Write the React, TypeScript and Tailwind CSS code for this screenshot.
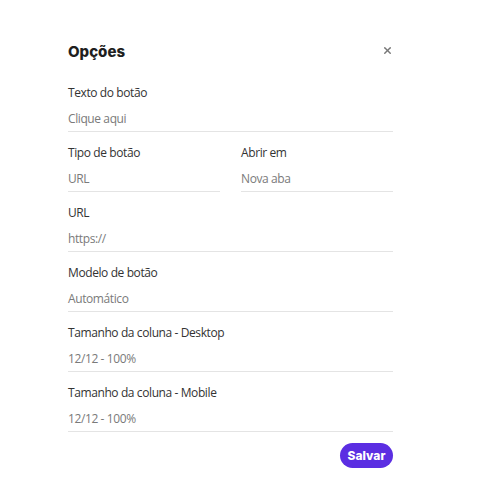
import { X } from 'lucide-react';

type Field = { label: string; value: string };

function FieldRow({ label, value }: Field) {
  return (
    <div className="flex flex-col">
      <span className="h-[20px] text-[12px] leading-[20px] tracking-[-0.4px] text-[#333333]">{label}</span>
      <span className="mt-[6px] h-[20px] text-[12px] leading-[20px] tracking-[-0.4px] text-[#7a7a7a]">{value}</span>
      <div className="mt-[2px] border-b border-[#e4e4e4]" />
    </div>
  );
}

export default function App() {
  const fields: Field[] = [
    { label: 'URL', value: 'https://' },
    { label: 'Modelo de botão', value: 'Automático' },
    { label: 'Tamanho da coluna - Desktop', value: '12/12 - 100%' },
    { label: 'Tamanho da coluna - Mobile', value: '12/12 - 100%' },
  ];

  return (
    <div className="h-[503px] w-[500px] bg-white font-['Open_Sans',sans-serif]">
      <div className="ml-[68px] w-[325px] pt-[42px]">
        {/* header */}
        <div className="flex h-[20px] items-center justify-between">
          <h2 className="font-['Inter',sans-serif] text-[15px] font-extrabold leading-[20px] text-[#1f1f1f]">
            Opções
          </h2>
          <button className="-mt-[4px] text-[#777777]">
            <X size={11} strokeWidth={3} />
          </button>
        </div>

        {/* form */}
        <div className="mt-[21px] flex flex-col gap-[11px]">
          <FieldRow label="Texto do botão" value="Clique aqui" />
          <div className="grid grid-cols-2 gap-[21px]">
            <FieldRow label="Tipo de botão" value="URL" />
            <FieldRow label="Abrir em" value="Nova aba" />
          </div>
          {fields.map(f => (
            <FieldRow key={f.label} label={f.label} value={f.value} />
          ))}
        </div>

        <div className="mt-[11px] flex justify-end">
          <button className="h-[25px] w-[53px] rounded-full bg-[#5b2ee2] font-['Inter',sans-serif] text-[12px] font-extrabold text-white">
            Salvar
          </button>
        </div>
      </div>
    </div>
  );
}
